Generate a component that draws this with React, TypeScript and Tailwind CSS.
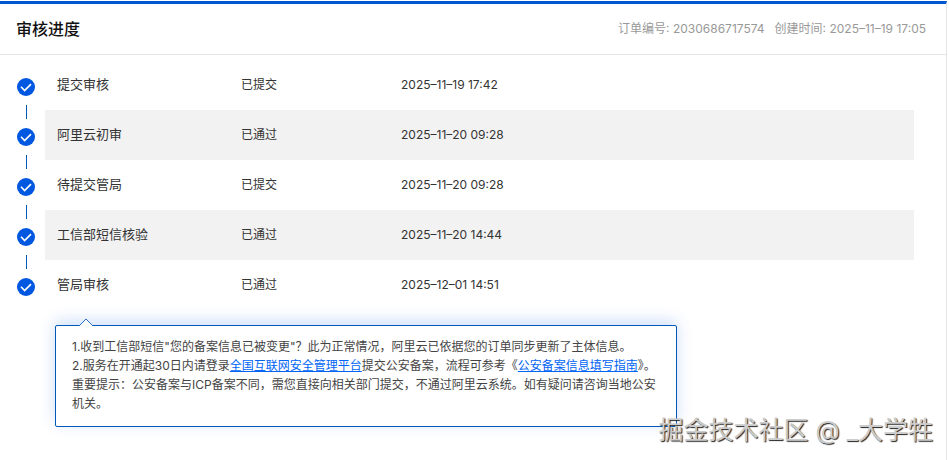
interface Step {
  name: string;
  status: string;
  time: string;
}

const steps: Step[] = [
  { name: "提交审核", status: "已提交", time: "2025–11–19 17:42" },
  { name: "阿里云初审", status: "已通过", time: "2025–11–20 09:28" },
  { name: "待提交管局", status: "已提交", time: "2025–11–20 09:28" },
  { name: "工信部短信核验", status: "已通过", time: "2025–11–20 14:44" },
  { name: "管局审核", status: "已通过", time: "2025–12–01 14:51" },
];

const CheckIcon = () => (
  <svg viewBox="0 0 18 18" className="block size-[18px]" aria-hidden="true">
    <circle cx="9" cy="9" r="9" fill="#0058e0" />
    <path
      d="M4 8.8l3.6 3.7 6.4-6.4"
      fill="none"
      stroke="#fff"
      strokeWidth="1.6"
    />
  </svg>
);

const Header = () => (
  <header className="flex h-[51px] items-center justify-between border-b border-[#e5e5e5] pl-4 pr-5">
    <h1 className="text-base font-medium text-[#111]">审核进度</h1>
    <div className="flex gap-[10px] text-xs text-[#999]">
      <span>订单编号: 2030686717574</span>
      <span>创建时间: 2025–11–19 17:05</span>
    </div>
  </header>
);

const Progress = () => (
  <div className="flex pl-[17px] pr-8 pt-[5px]">
    {/* check marks with the connector lines between them */}
    <ol className="flex w-7 shrink-0 flex-col pt-[18px]">
      {steps.map((step, i) => (
        <li key={step.name} className="flex w-[18px] flex-col items-center">
          <CheckIcon />
          {i < steps.length - 1 && (
            <span className="my-[9px] h-[14px] w-px bg-[#0058b8]" />
          )}
        </li>
      ))}
    </ol>
    <table className="w-full table-fixed text-left text-xs text-[#333]">
      <tbody>
        {steps.map((step) => (
          <tr key={step.name} className="h-[50px] even:bg-[#f2f2f2]">
            <th
              scope="row"
              className="w-[196px] pl-3 text-[13px] font-normal"
            >
              {step.name}
            </th>
            <td className="w-40">{step.status}</td>
            <td>{step.time}</td>
          </tr>
        ))}
      </tbody>
    </table>
  </div>
);

const Notice = () => (
  <div className="pl-[55px] pr-4 pt-[15px]">
    <section className="relative w-full max-w-[622px] rounded-[2px] border border-[#0058b8] bg-white px-4 pb-[13px] pt-[11px] text-xs leading-[19px] text-[#444] shadow-[0_-4px_16px_rgba(0,88,224,0.2)]">
      <svg
        viewBox="0 0 16 8"
        className="absolute -top-2 left-[22px] h-2 w-4"
        aria-hidden="true"
      >
        <path d="M1 8l7-7 7 7" fill="#fff" stroke="#2a6fc4" />
      </svg>
      <p>
        1.收到工信部短信"您的备案信息已被变更"？此为正常情况，阿里云已依据您的订单同步更新了主体信息。
      </p>
      <p>
        2.服务在开通起30日内请登录
        <a href="#platform" className="text-[#0064f5] underline">
          全国互联网安全管理平台
        </a>
        提交公安备案，流程可参考《
        <a href="#guide" className="text-[#0064f5] underline">
          公安备案信息填写指南
        </a>
        》。
      </p>
      <p>
        重要提示：公安备案与ICP备案不同，需您直接向相关部门提交，不通过阿里云系统。如有疑问请咨询当地公安机关。
      </p>
    </section>
  </div>
);

export default function App() {
  return (
    <div
      lang="zh-CN"
      className="relative min-h-screen bg-white pr-[2px] pt-px font-['Inter','Noto_Sans_CJK_SC',sans-serif]"
    >
      <main className="min-h-[calc(100vh-1px)] border-r border-t-[3px] border-r-[#e5e5e5] border-t-[#0058d0]">
        <Header />
        <Progress />
        <Notice />
      </main>
      <p className="absolute bottom-3 right-4 text-[25px] leading-9 text-[#ccc] [text-shadow:1px_1px_1px_#222]">
        掘金技术社区 @ _大学牲
      </p>
    </div>
  );
}
